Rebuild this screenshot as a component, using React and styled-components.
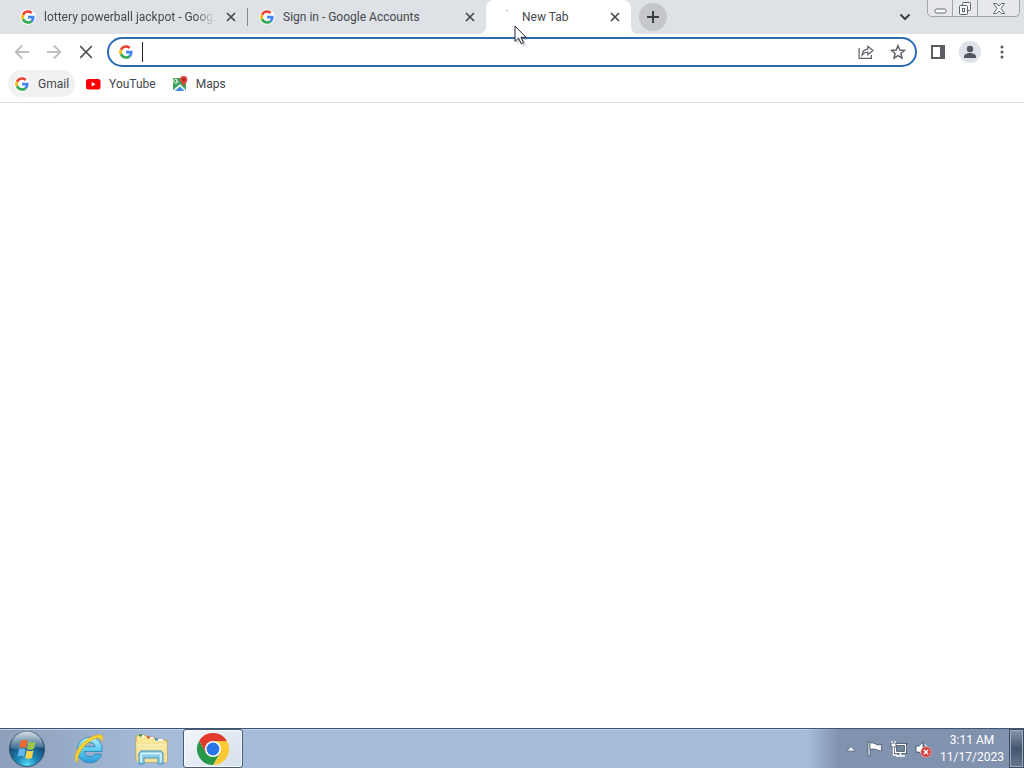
import React, { useState } from "react";
import styled, { createGlobalStyle } from "styled-components";

const App = () => {
  const [query, setQuery] = useState("");

  return (
    <>
      <GlobalStyle />
      <Desktop>
        <Browser>
          <TabStrip>
            <Tabs>
              <Tab>
                <GoogleIcon />
                <TabTitle $faded>lottery powerball jackpot - Goog</TabTitle>
                <CloseTab />
              </Tab>
              <Tab $divided>
                <GoogleIcon />
                <TabTitle>Sign in - Google Accounts</TabTitle>
                <CloseTab />
              </Tab>
              <Tab $active>
                <svg width="16" height="16" viewBox="0 0 16 16">
                  <path d="M8 1.5h2" stroke="#a9b4cc" strokeWidth="1" />
                </svg>
                <TabTitle>New Tab</TabTitle>
                <CloseTab />
              </Tab>
            </Tabs>
            <NewTabButton aria-label="New tab">
              <svg width="14" height="14" viewBox="0 0 14 14">
                <path d="M7 1v12M1 7h12" stroke="#3c4043" strokeWidth="2" />
              </svg>
            </NewTabButton>
            <Spacer />
            <SearchTabs aria-label="Search tabs">
              <svg width="12" height="12" viewBox="0 0 12 12">
                <path d="M1.5 3.5L6 8l4.500-4.500" fill="none" stroke="#3c4043" strokeWidth="2" />
              </svg>
            </SearchTabs>
            <WindowControls>
              <WindowButton $width={24} aria-label="Minimize">
                <svg width="13" height="15" viewBox="0 0 13 15">
                  <rect x="1" y="8" width="11" height="4" rx="1.500" fill="#f8f9fb" stroke="#676a71" />
                </svg>
              </WindowButton>
              <WindowButton $width={25} aria-label="Restore">
                <svg width="14" height="15" viewBox="0 0 14 15">
                  <g fill="#f8f9fb" stroke="#5f6269">
                    <rect x="4.500" y="1.500" width="8" height="8" rx="1" />
                    <rect x="1.500" y="4.500" width="8" height="9" rx="1" />
                    <rect x="4.500" y="7.500" width="2" height="3" />
                  </g>
                </svg>
              </WindowButton>
              <WindowButton $width={42} aria-label="Close">
                <svg width="14" height="15" viewBox="0 0 14 15">
                  <path
                    d="M1.500 2.500h3.200L7 5l2.300-2.500h3.200L9 7.500l3.500 5H9.300L7 10l-2.300 2.500H1.500l3.500-5z"
                    fill="#f8f9fb"
                    stroke="#676a71"
                  />
                </svg>
              </WindowButton>
            </WindowControls>
          </TabStrip>

          <Toolbar>
            <ToolButton aria-label="Back" disabled>
              <svg width="16" height="16" viewBox="0 0 16 16">
                <path d="M15 8H2M8.200 1.500L1.700 8l6.500 6.500" fill="none" stroke="#bcbec1" strokeWidth="1.800" />
              </svg>
            </ToolButton>
            <ToolButton aria-label="Forward" disabled>
              <svg width="16" height="16" viewBox="0 0 16 16">
                <path d="M1 8h13M7.800 1.500L14.300 8l-6.500 6.500" fill="none" stroke="#bcbec1" strokeWidth="1.800" />
              </svg>
            </ToolButton>
            <ToolButton aria-label="Stop loading">
              <svg width="14" height="14" viewBox="0 0 14 14">
                <path d="M1.200 1.200l11.600 11.600M12.800 1.200L1.200 12.800" stroke="#55585c" strokeWidth="1.700" />
              </svg>
            </ToolButton>
            <Omnibox>
              <GoogleIcon />
              <AddressInput
                aria-label="Address and search bar"
                value={query}
                onChange={(e) => setQuery(e.target.value)}
              />
              <ToolButton aria-label="Share this page">
                <svg width="16" height="16" viewBox="0 0 16 16">
                  <g fill="none" stroke="#5f6368" strokeWidth="1.200">
                    <path d="M1.100 4v10.400h12.300V11" />
                    <path d="M4 11.200C4.300 7.300 6.300 5.300 9.800 5.100V2.300L15 6.500l-5.200 4.200V8C7.200 8 5.500 9 4 11.200z" />
                  </g>
                </svg>
              </ToolButton>
              <ToolButton aria-label="Bookmark this tab">
                <svg width="16" height="16" viewBox="0 0 16 16">
                  <path
                    d="M8 1.700l1.800 4.300 4.700.400-3.600 3.100 1.100 4.600L8 11.600l-4 2.500 1.100-4.600L1.500 6.400 6.200 6z"
                    fill="none"
                    stroke="#5f6368"
                    strokeWidth="1.500"
                  />
                </svg>
              </ToolButton>
            </Omnibox>
            <ToolButton aria-label="Side panel">
              <svg width="14" height="14" viewBox="0 0 14 14">
                <path d="M0 0h14v14H0zM2 2v10h7V2z" fill="#5a5d62" fillRule="evenodd" />
              </svg>
            </ToolButton>
            <ToolButton aria-label="Profile">
              <svg width="22" height="22" viewBox="0 0 22 22">
                <circle cx="11" cy="11" r="11" fill="#dfe2e9" />
                <circle cx="11" cy="8" r="3.200" fill="#53575f" />
                <path d="M5 17v-1.500c0-2.300 3.200-3.500 6-3.500s6 1.200 6 3.500V17z" fill="#53575f" />
              </svg>
            </ToolButton>
            <ToolButton aria-label="Customize and control">
              <svg width="4" height="14" viewBox="0 0 4 14">
                <g fill="#55585c">
                  <circle cx="2" cy="2" r="1.500" />
                  <circle cx="2" cy="7" r="1.500" />
                  <circle cx="2" cy="12" r="1.500" />
                </g>
              </svg>
            </ToolButton>
          </Toolbar>

          <BookmarksBar>
            <Bookmark href="#gmail" $hovered>
              <GoogleIcon />
              Gmail
            </Bookmark>
            <Bookmark href="#youtube">
              <YouTubeIcon />
              YouTube
            </Bookmark>
            <Bookmark href="#maps">
              <MapsIcon />
              Maps
            </Bookmark>
          </BookmarksBar>
          <Page />
        </Browser>

        <Taskbar>
          <StartButton aria-label="Start">
            <StartOrb />
          </StartButton>
          <TaskButton aria-label="Internet Explorer">
            <ExplorerIcon />
          </TaskButton>
          <TaskButton aria-label="File Explorer">
            <FolderIcon />
          </TaskButton>
          <TaskButton aria-label="Google Chrome" $open>
            <ChromeIcon />
          </TaskButton>
          <Spacer />
          <Tray>
            <TrayButton aria-label="Show hidden icons">
              <svg width="10" height="6" viewBox="0 0 10 6">
                <path d="M5 .5L9 5H1z" fill="#f5f8fc" stroke="#50617a" strokeWidth=".6" />
              </svg>
            </TrayButton>
            <TrayButton aria-label="Action Center">
              <FlagIcon />
            </TrayButton>
            <TrayButton aria-label="Network">
              <NetworkIcon />
            </TrayButton>
            <TrayButton aria-label="Volume muted">
              <VolumeIcon />
            </TrayButton>
            <Clock>
              <span>3:11 AM</span>
              <span>11/17/2023</span>
            </Clock>
            <ShowDesktop aria-label="Show desktop" />
          </Tray>
        </Taskbar>

        <Pointer width="14" height="22" viewBox="0 0 14 22">
          <path d="M3 3v16l4-3 2 5 3-1-2-5h4z" fill="#8b8b96" opacity=".35" />
          <path d="M1 1v15.500l3.600-3.400 2.600 5.700 2.300-1-2.500-5.500h5z" fill="#fff" stroke="#23233a" />
        </Pointer>
      </Desktop>
    </>
  );
};

const CloseTab = () => (
  <CloseButton aria-label="Close tab">
    <svg width="10" height="10" viewBox="0 0 10 10">
      <path d="M1 1l8 8M9 1L1 9" stroke="#45484d" strokeWidth="1.700" />
    </svg>
  </CloseButton>
);

const GoogleIcon = () => (
  <svg width="16" height="16" viewBox="-4 -4 56 56">
    <circle cx="24" cy="24" r="27" fill="#fff" />
    <path
      fill="#EA4335"
      d="M24 9.500c3.540 0 6.710 1.220 9.210 3.600l6.850-6.850C35.900 2.380 30.470 0 24 0 14.620 0 6.510 5.380 2.560 13.220l7.980 6.190C12.430 13.720 17.740 9.500 24 9.500z"
    />
    <path
      fill="#4285F4"
      d="M46.980 24.550c0-1.570-.15-3.090-.38-4.550H24v9.020h12.940c-.58 2.960-2.260 5.480-4.780 7.180l7.730 6c4.510-4.180 7.090-10.360 7.090-17.650z"
    />
    <path
      fill="#FBBC05"
      d="M10.530 28.590c-.48-1.450-.76-2.990-.76-4.590s.27-3.140.76-4.590l-7.980-6.190C.92 16.460 0 20.120 0 24c0 3.880.92 7.540 2.560 10.780l7.970-6.190z"
    />
    <path
      fill="#34A853"
      d="M24 48c6.480 0 11.930-2.130 15.890-5.810l-7.730-6c-2.150 1.450-4.920 2.300-8.160 2.300-6.260 0-11.570-4.220-13.470-9.910l-7.980 6.190C6.510 42.620 14.620 48 24 48z"
    />
  </svg>
);

const YouTubeIcon = () => (
  <svg width="16" height="16" viewBox="0 0 16 16">
    <rect x="1" y="3" width="14.500" height="10.500" rx="2.500" fill="#f00" />
    <path d="M6.700 6v4.500l4-2.250z" fill="#fff" />
  </svg>
);

const MapsIcon = () => (
  <svg width="16" height="16" viewBox="0 0 16 16">
    <rect x="1" y="2" width="13" height="13" rx="1" fill="#3da35b" />
    <path d="M1 14l7-6 6 6v1h-2L8 10.500 3 15H1z" fill="#e9eef5" />
    <path d="M4 15l4-4 4 4z" fill="#4285f4" />
    <path d="M5.800 5.200a2 2 0 1 1-.6-1.400L4.300 4.700M6 5.200H4" fill="none" stroke="#fff" />
    <path d="M11.700 0a3.700 3.700 0 0 1 3.700 3.700c0 2.800-2.900 3.300-3.700 6.800C10.900 7 8 6.500 8 3.700A3.700 3.700 0 0 1 11.700 0z" fill="#dc4437" />
    <circle cx="11.700" cy="3.700" r="1.300" fill="#7d2019" />
  </svg>
);

const StartOrb = () => (
  <svg width="38" height="38" viewBox="0 0 38 38">
    <defs>
      <radialGradient id="orb" cx=".5" cy=".95" r=".85">
        <stop offset="0" stopColor="#57dcf3" />
        <stop offset=".35" stopColor="#1c86b5" />
        <stop offset=".75" stopColor="#174d78" />
        <stop offset="1" stopColor="#47637e" />
      </radialGradient>
      <linearGradient id="gloss" x2="0" y2="1">
        <stop offset="0" stopColor="#eef5fa" stopOpacity=".85" />
        <stop offset="1" stopColor="#a9c4d8" stopOpacity=".25" />
      </linearGradient>
    </defs>
    <circle cx="19" cy="19" r="17.500" fill="url(#orb)" stroke="#37506c" />
    <path d="M2.500 18a16.500 16.500 0 0 1 33 0c-9-3-22 4-33 0z" fill="url(#gloss)" />
    <path d="M13 10.500c2.500-1.300 4.500-1 6.500.3l-1.600 7.400c-2-1.200-4.300-1.300-6.700-.2z" fill="#ed6a2b" />
    <path d="M20.700 11.500c2.200 1.200 4.300 1.300 6.800.2l-1.700 7.300c-2.300 1.200-4.600 1-6.700-.1z" fill="#9bc848" />
    <path d="M10.900 19.200c2.400-1.100 4.600-1 6.700.2L16 26.600c-2-1.200-4.200-1.300-6.700-.2z" fill="#66b5ec" />
    <path d="M18.800 20.200c2.200 1.200 4.400 1.200 6.700.2L23.900 28c-2.300 1.100-4.500.9-6.700-.3z" fill="#fbd44e" />
  </svg>
);

const ExplorerIcon = () => (
  <svg width="32" height="32" viewBox="0 0 32 32">
    <defs>
      <linearGradient id="ie" x2="0" y2="1">
        <stop offset="0" stopColor="#b5effc" />
        <stop offset=".5" stopColor="#5cccf0" />
        <stop offset="1" stopColor="#2c9bd6" />
      </linearGradient>
    </defs>
    <path
      d="M29 18.500H11.500c.2 3 2.200 5 5.300 5 2.200 0 3.800-.8 4.800-2.300h6.900C27 26.400 22.600 29.800 17 29.800 9.700 29.800 4.300 24.500 4.300 17S9.700 4.200 17 4.200c7.400 0 12 5.200 12 12.300zM11.700 13.700h10.500c-.4-2.700-2.400-4.200-5.300-4.200-2.800 0-4.800 1.500-5.200 4.200z"
      fill="url(#ie)"
      stroke="#287fb4"
      strokeWidth=".8"
    />
    <path
      d="M4 29.500C-1 25 4.500 13 14 6.500 20.500 2 28 .2 29.500 3c.8 1.600.2 4-1 6 .2-3-1.500-4.500-5-3.700C16 7 7.500 16 5.300 23c-.9 2.800-1 4.800-.3 6.500z"
      fill="#f5d52f"
      stroke="#d3a625"
      strokeWidth=".6"
    />
  </svg>
);

const FolderIcon = () => (
  <svg width="34" height="32" viewBox="0 0 34 32">
    <path d="M2 27V4l2-2h7l2 2h6l2 2h5l2 1h5v22H4z" fill="#f8e795" stroke="#c2a252" />
    <path d="M5 3h5M14 5h5M22 7h7" stroke="#fff" strokeWidth="2" />
    <path d="M5 2.500h3" stroke="#31953e" strokeWidth="2" />
    <path d="M13 4.500h3" stroke="#d65731" strokeWidth="2" />
    <path d="M21 6.500h3" stroke="#3489c4" strokeWidth="2" />
    <path d="M2 9h8l3 1h20v19H3z" fill="#f6e39a" />
    <path d="M3 12h29M3 15h29" stroke="#fbf3c2" />
    <path d="M5 31V20l2-2h20l2 2v11h-5v-6H10v6z" fill="#8dcfea" stroke="#4994bb" />
    <path d="M7 20.500h20M7 21v8M27 21v8" stroke="#d9f5fd" strokeWidth="1.500" />
  </svg>
);

const ChromeIcon = () => (
  <svg width="32" height="32" viewBox="0 0 32 32">
    <path d="M16 8h13.860A16 16 0 0 1 16 32l6.930-12z" fill="#fcc934" />
    <path d="M22.930 20L16 32A16 16 0 0 1 2.140 8l6.930 12z" fill="#279847" />
    <path d="M2.140 8A16 16 0 0 1 29.860 8H16L9.070 20z" fill="#e33b2e" />
    <circle cx="16" cy="16" r="8" fill="#fff" />
    <circle cx="16" cy="16" r="6.400" fill="#2874e8" />
  </svg>
);

const FlagIcon = () => (
  <svg width="18" height="18" viewBox="0 0 18 18">
    <path d="M2 2h2v14H2z" fill="#fff" stroke="#34465c" strokeWidth=".7" />
    <path d="M4 3c3-1 4 1 6 1l1 1 5-.500c-1 2-1 4 0 6-2 .5-4 .5-5-1-2 0-4-1-7 0z" fill="#fff" stroke="#34465c" strokeWidth=".7" />
  </svg>
);

const NetworkIcon = () => (
  <svg width="18" height="18" viewBox="0 0 18 18">
    <path d="M5.500 4.500h10v8h-10z" fill="#70849d" stroke="#26384e" strokeWidth="3" />
    <path d="M5.500 4.500h10v8h-10zM10.500 13v3M6 16h9" fill="none" stroke="#fff" strokeWidth="1.500" />
    <path d="M1 3h5v4H1z" fill="#fff" stroke="#26384e" strokeWidth=".7" />
    <path d="M2 1v2M5 1v2M3.500 7v8H7" fill="none" stroke="#fff" strokeWidth="1.300" />
  </svg>
);

const VolumeIcon = () => (
  <svg width="18" height="18" viewBox="0 0 18 18">
    <path d="M2 6h3l4-4v14l-4-4H2z" fill="#fff" stroke="#34465c" strokeWidth=".8" />
    <path d="M11 4c1 1 1.500 2 1.500 4" fill="none" stroke="#fff" />
    <circle cx="12" cy="12" r="5.200" fill="#d83a35" stroke="#f2aaa5" strokeWidth=".7" />
    <path d="M9.800 9.800l4.400 4.400M14.200 9.800l-4.400 4.400" stroke="#fff" strokeWidth="1.600" />
  </svg>
);

const GlobalStyle = createGlobalStyle`
  * {
    box-sizing: border-box;
  }

  body {
    margin: 0;
    font-family: Roboto, "Open Sans", sans-serif;
    font-size: 12px;
    color: #45484d;
  }

  button {
    padding: 0;
    border: 0;
    background: none;
    font: inherit;
  }

  svg {
    display: block;
    flex: none;
  }
`;

const Desktop = styled.div`
  position: relative;
  display: flex;
  flex-direction: column;
  min-height: 100vh;
  background: #fff;
`;

const Browser = styled.div`
  flex: 1;
  display: flex;
  flex-direction: column;
`;

const Spacer = styled.div`
  flex: 1;
`;

const TabStrip = styled.header`
  display: flex;
  height: 34px;
  padding: 0 4px 0 8px;
  background: #dee1e6;
`;

const Tabs = styled.div`
  display: flex;
  min-width: 0;
`;

const Tab = styled.div`
  position: relative;
  display: flex;
  align-items: center;
  gap: 8px;
  width: ${(props) => (props.$active ? "145px" : "239px")};
  min-width: 0;
  padding: 0 8px 0 12px;
  border-radius: 8px 8px 0 0;
  background: ${(props) => (props.$active ? "#fff" : "transparent")};

  /* 활성 탭 아래쪽 곡선과 비활성 탭 구분선 */
  &::before,
  &::after {
    content: "";
    display: ${(props) => (props.$active ? "block" : "none")};
    position: absolute;
    bottom: 0;
    width: 8px;
    height: 8px;
  }

  &::before {
    left: -8px;
    background: radial-gradient(circle at 0 0, transparent 8px, #fff 8px);
  }

  &::after {
    right: -8px;
    background: radial-gradient(circle at 100% 0, transparent 8px, #fff 8px);
  }

  ${(props) =>
    props.$divided &&
    `
    &::before {
      display: block;
      left: 0;
      bottom: 8px;
      width: 1px;
      height: 18px;
      background: #85888d;
    }
  `}
`;

const TabTitle = styled.span`
  flex: 1;
  min-width: 0;
  overflow: hidden;
  white-space: nowrap;
  line-height: 18px;
  ${(props) => props.$faded && "mask-image: linear-gradient(to left, transparent, #000 20px);"}
`;

const CloseButton = styled.button`
  display: flex;
  align-items: center;
  justify-content: center;
  width: 16px;
  height: 16px;
`;

const NewTabButton = styled.button`
  display: flex;
  align-items: center;
  justify-content: center;
  align-self: center;
  width: 28px;
  height: 28px;
  margin-left: 8px;
  border-radius: 50%;
  background: #c5c7cb;
`;

const SearchTabs = styled.button`
  display: flex;
  align-items: center;
  justify-content: center;
  width: 28px;
  margin-right: 8px;
`;

const WindowControls = styled.div`
  display: flex;
  align-self: flex-start;
  height: 17px;
  border: 1px solid #a0a3a9;
  border-top: 0;
  border-radius: 0 0 5px 5px;
  background: #e6e8ec;
`;

const WindowButton = styled.button`
  display: flex;
  align-items: center;
  justify-content: center;
  width: ${(props) => props.$width}px;

  & + & {
    border-left: 1px solid #a0a3a9;
  }
`;

const Toolbar = styled.div`
  display: flex;
  align-items: center;
  height: 36px;
  padding: 0 6px;
`;

const ToolButton = styled.button`
  display: flex;
  align-items: center;
  justify-content: center;
  flex: none;
  width: 32px;
  height: 28px;
`;

const Omnibox = styled.div`
  flex: 1;
  display: flex;
  align-items: center;
  height: 30px;
  margin: 0 5px;
  padding: 0 1px 0 9px;
  border: 2px solid #2b6cb3;
  border-radius: 15px;
`;

const AddressInput = styled.input`
  flex: 1;
  min-width: 0;
  height: 20px;
  margin-left: 8px;
  padding: 0;
  border: 0;
  border-left: 1px solid #222;
  outline: none;
  background: none;
  font: inherit;
`;

const BookmarksBar = styled.nav`
  display: flex;
  align-items: center;
  gap: 4px;
  height: 33px;
  padding: 0 8px 5px;
  border-bottom: 1px solid #d9dbde;
`;

const Bookmark = styled.a`
  display: flex;
  align-items: center;
  gap: 8px;
  height: 27px;
  padding: 0 6px;
  border-radius: 14px;
  background: ${(props) => (props.$hovered ? "#f1f1f2" : "transparent")};
  color: inherit;
  text-decoration: none;
`;

const Page = styled.main`
  flex: 1;
`;

const Taskbar = styled.footer`
  display: flex;
  height: 40px;
  border-top: 1px solid #3e5673;
  background: linear-gradient(to right, #8d9fba, #a5bddb 160px);
  box-shadow: inset 0 1px #c3d2e5;
`;

const StartButton = styled.button`
  display: flex;
  align-items: center;
  justify-content: center;
  width: 54px;
  margin-right: 5px;
`;

const TaskButton = styled.button`
  display: flex;
  align-items: center;
  justify-content: center;
  width: 60px;
  margin-right: 2px;
  ${(props) =>
    props.$open &&
    `
    border: 1px solid #4a5b72;
    border-radius: 3px;
    background: linear-gradient(135deg, #f3f6fa, #d4dfec);
    box-shadow: inset 0 0 0 1px #f8fafc;
  `}
`;

const Tray = styled.div`
  display: flex;
  align-items: center;
  padding-left: 32px;
  background: linear-gradient(to right, transparent, #8092ae 32px);
`;

const TrayButton = styled.button`
  display: flex;
  align-items: center;
  justify-content: center;
  width: 24px;
  height: 24px;
`;

const Clock = styled.time`
  display: flex;
  flex-direction: column;
  align-items: center;
  width: 74px;
  line-height: 17px;
  color: #fff;
`;

const ShowDesktop = styled.button`
  align-self: stretch;
  width: 15px;
  border: 1px solid #3d4b5f;
  background: linear-gradient(#8796aa, #44566f 50%, #65778f);
  box-shadow: inset 0 0 0 1px #9dabbd;
`;

const Pointer = styled.svg`
  position: absolute;
  top: 25px;
  left: 514px;
  pointer-events: none;
`;

export default App;
